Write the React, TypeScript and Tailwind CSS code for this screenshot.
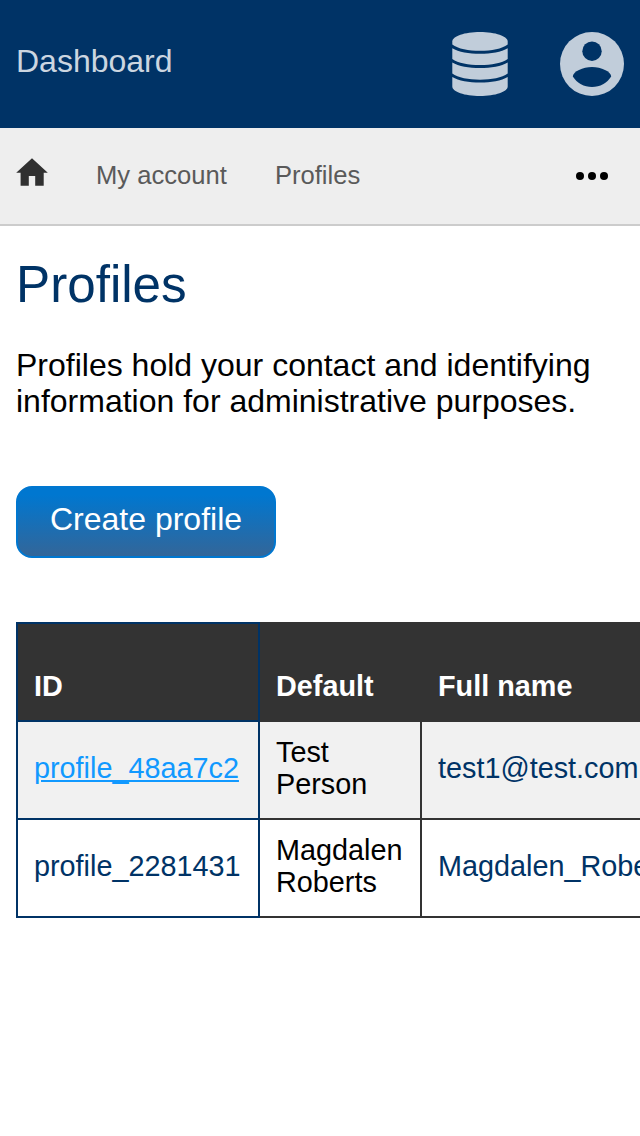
import React from "react";

function DatabaseIcon() {
  return (
    <svg className="h-16 w-14 shrink-0" viewBox="0 0 56 64" fill="#c1cdda">
      <path d="M0.300 9.500C0.300 4.200 12.700 0 28 0S55.700 4.200 55.700 9.500V12.500C50 16.800 39.500 18.800 28 18.800S6 16.800 0.300 12.500z" />
      <path d="M0.300 16.200C6.500 20 17 21.700 28 21.700S49.500 20 55.700 16.200V27C50 31.200 39.500 33.100 28 33.100S6 31.200 0.300 27z" />
      <path d="M0.300 30.600C6.500 34.400 17 36.100 28 36.100S49.500 34.400 55.700 30.600V41.600C50 45.800 39.500 47.700 28 47.700S6 45.800 0.300 41.600z" />
      <path d="M0.300 45.100C6.500 48.900 17 50.600 28 50.600S49.500 48.900 55.700 45.100V54.500C55.700 59.800 43.300 64 28 64S0.300 59.800 0.300 54.500z" />
    </svg>
  );
}

function AccountIcon() {
  return (
    <svg className="size-16 shrink-0" viewBox="0 0 64 64">
      <circle cx="32" cy="32" r="32" fill="#c1cdda" />
      <circle cx="32" cy="19.200" r="9.700" fill="#003366" />
      <path d="M12.800 44.500C12.800 39.500 23 34.900 32 34.900S51.200 39.500 51.200 44.500C47 51 40 55 32 55S17 51 12.800 44.500z" fill="#003366" />
    </svg>
  );
}

const rows = [
  { id: "profile_48aa7c2", name: "Test Person", email: "test1@test.com" },
  { id: "profile_2281431", name: "Magdalen Roberts", email: "Magdalen_Roberts@test.com" },
];

export default function App() {
  return (
    <div className="h-[1136px] w-full overflow-hidden bg-white font-['Liberation_Sans',Arial,sans-serif] text-black">
      <header className="flex h-32 items-center bg-[#003366] px-4">
        <span className="mb-1.5 flex-1 text-[32px] leading-9 text-[#ccd6e0]">Dashboard</span>
        <div className="flex items-center gap-[52px]">
          <DatabaseIcon />
          <AccountIcon />
        </div>
      </header>
      <nav className="flex h-[98px] items-center border-b-2 border-[#cccccc] bg-[#eeeeee] pr-8 pl-4 text-[25.6px] text-[#5a5a5a]">
        <svg className="mr-12 mb-2 h-7 w-8" viewBox="0 0 32 28" fill="#303030">
          <path d="M16 0.300L31.800 14.800H27.700V27.700H19.200V18H12.800V27.700H4.600V14.800H0.200z" />
        </svg>
        <span className="mr-12 mb-0.5">My account</span>
        <span className="mb-0.5 flex-1">Profiles</span>
        <svg className="h-8 w-8" viewBox="0 0 32 32">
          <circle cx="4" cy="16" r="4" /><circle cx="16" cy="16" r="4" /><circle cx="28" cy="16" r="4" />
        </svg>
      </nav>
      <main className="pl-4">
        <h1 className="pt-[30px] text-[51.2px] leading-[58px] text-[#003366]">Profiles</h1>
        <p className="mt-[33px] w-[600px] text-[32px] leading-9">Profiles hold your contact and identifying information for administrative purposes.</p>
        <button className="mt-[67px] block h-[72px] w-[260px] rounded-2xl border-2 border-[#0077d0] bg-linear-to-b/srgb from-[#0077d0] from-10% to-[#336699] pb-1.5 text-[32px] leading-9 text-white">Create profile</button>
        <table className="mt-16 w-[860px] table-fixed border-collapse text-left text-[28.8px] leading-8">
          <colgroup>
            <col className="w-[242px]" /><col className="w-[162px]" /><col />
          </colgroup>
          <thead>
            <tr className="h-[98px] bg-[#333333] text-white">
              <th className="border-2 border-[#003366] px-4 pt-7">ID</th>
              <th className="border-2 border-[#333333] px-4 pt-7">Default</th>
              <th className="border-2 border-[#333333] px-4 pt-7">Full name</th>
            </tr>
          </thead>
          <tbody>
            {rows.map((row, i) => (
              <tr key={row.id} className={i === 0 ? "h-[98px] bg-[#f1f1f1]" : "h-[98px]"}>
                <td className="border-2 border-[#003366] px-4 pb-1">
                  <a className={i === 0 ? "text-[#1199ff] underline" : "text-[#003366]"}>{row.id}</a>
                </td>
                <td className="border-2 border-[#333333] px-4 pb-1">{row.name}</td>
                <td className="border-2 border-[#333333] px-4 pb-1 text-[#003366]">{row.email}</td>
              </tr>
            ))}
          </tbody>
        </table>
      </main>
    </div>
  );
}
